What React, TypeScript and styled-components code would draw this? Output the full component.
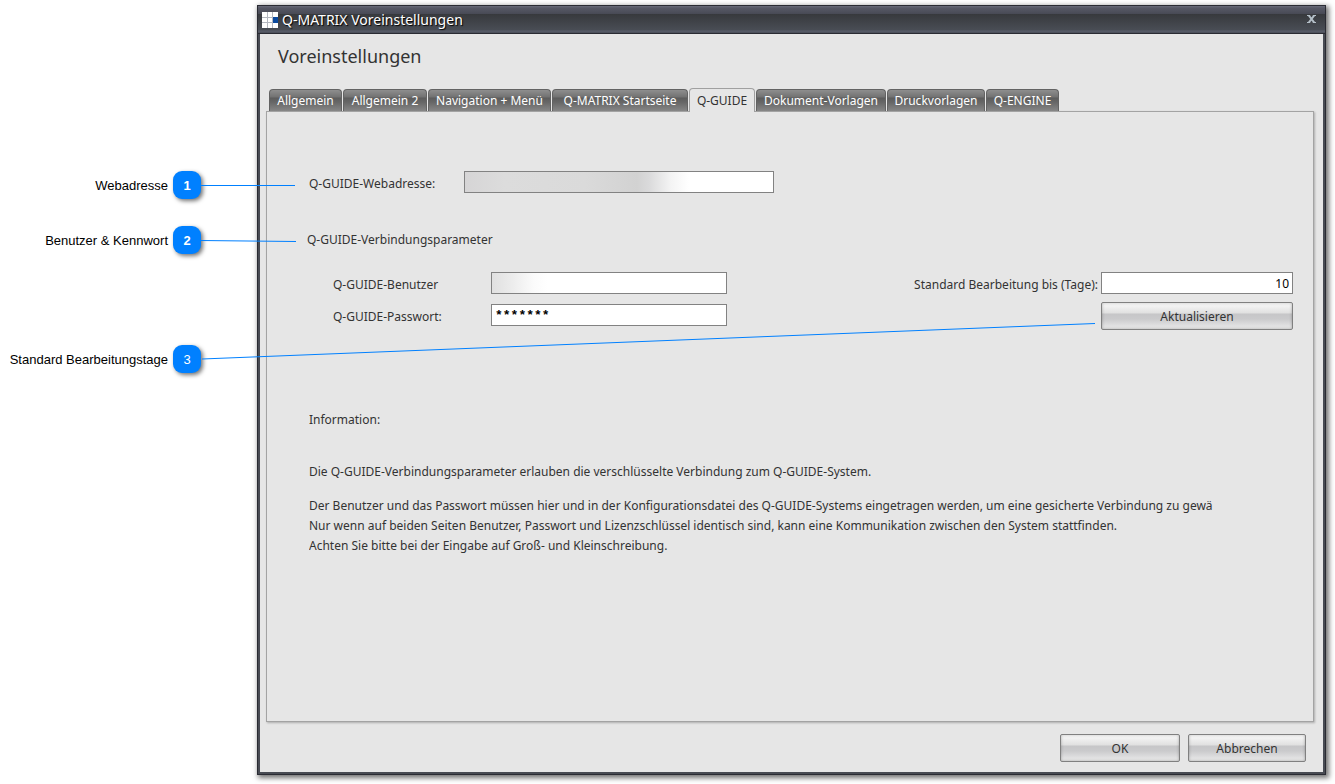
import React from "react";
import styled, { createGlobalStyle } from "styled-components";

const GlobalStyle = createGlobalStyle`
  *, *::before, *::after { box-sizing: border-box; }
  body {
    margin: 0;
    background: #fff;
    color: #333;
    font: 12px/20px "Noto Sans", "DejaVu Sans Condensed", sans-serif;
  }
  p, h1, h2, ol { margin: 0; padding: 0; }
  input, button { font: inherit; color: inherit; }
`;

const Page = styled.div`
  position: relative;
  display: flex;
  min-height: 100vh;
  padding: 5px 9px 9px 0;
`;

const Gutter = styled.ol`
  flex: 0 0 257px;
  display: flex;
  flex-direction: column;
  gap: 25px;
  padding: 166px 56px 0 0;
  list-style: none;
`;

const Callout = styled.li<{ $gapAbove?: boolean }>`
  display: flex;
  align-items: flex-start;
  justify-content: flex-end;
  gap: 5px;
  margin-top: ${(p) => (p.$gapAbove ? "64px" : "0")};
  color: #000;
  font: 13px/30px "Liberation Sans", Arial, sans-serif;
  white-space: nowrap;
`;

const Badge = styled.span<{ $bold?: boolean }>`
  width: 28px;
  height: 28px;
  border-radius: 9px;
  background: #0080ff;
  box-shadow: 2px 2px 4px rgba(0, 0, 0, 0.55);
  color: #fff;
  text-align: center;
  font-weight: ${(p) => (p.$bold ? 700 : 400)};
`;

const Leaders = styled.svg`
  position: absolute;
  left: 200px;
  top: 180px;
  width: 96px;
  height: 70px;
  pointer-events: none;
`;

const LongLeader = styled.svg`
  position: absolute;
  left: 202px;
  right: 240px;
  top: 323px;
  width: calc(100% - 442px);
  height: 37px;
  pointer-events: none;
`;

const Dialog = styled.section`
  flex: 1;
  min-width: 0;
  display: flex;
  flex-direction: column;
  border: 1px solid #2a2b33;
  background: #e6e6e6;
  box-shadow: 2px 2px 5px 1px rgba(0, 0, 0, 0.55);
`;

const TitleBar = styled.header`
  display: flex;
  align-items: center;
  height: 28px;
  padding: 0 8px 0 4px;
  border-bottom: 1px solid #2a2b33;
  background: linear-gradient(
    #696b7a 0, #565865 2px, #484a55 8px,
    #37393d 8px, #494d55 24px, #5a5e6b 25px, #4a4d57 27px
  );
  color: #fff;
`;

const AppIcon = styled.svg`
  width: 16px;
  height: 16px;
  margin-right: 4px;
`;

const Title = styled.h1`
  flex: 1;
  font-size: 14px;
  font-weight: 400;
  line-height: 26px;
  text-shadow: 1px 1px 1px #000;
`;

const CloseButton = styled.button`
  width: 12px;
  height: 12px;
  padding: 0 0 2px;
  border: 0;
  background: none;
  display: flex;
  align-items: center;
  justify-content: center;
`;

const Body = styled.div`
  flex: 1;
  display: flex;
  flex-direction: column;
  padding: 10px 9px 10px 6px;
  border: solid #484b53;
  border-width: 0 2px 2px;
`;

const Heading = styled.h2`
  margin: 0 0 20px 12px;
  font-size: 18px;
  font-weight: 400;
  line-height: 24px;
`;

const TabBar = styled.div`
  display: flex;
  align-items: flex-end;
  gap: 1px;
  height: 23px;
  padding-left: 3px;
`;

const Tab = styled.button<{ $active?: boolean; $width: number }>`
  position: relative;
  width: ${(p) => p.$width}px;
  height: ${(p) => (p.$active ? "24px" : "22px")};
  margin-bottom: ${(p) => (p.$active ? "-1px" : "0")};
  padding: 0;
  border: 1px solid ${(p) => (p.$active ? "#a0a0a0" : "#636363")};
  border-bottom: 0;
  border-radius: 4px 4px 0 0;
  background: ${(p) =>
    p.$active
      ? "#e6e6e6"
      : "linear-gradient(#8e8e8e 0, #727272 7px, #5c5c5c 8px, #666 12px, #8a8a8a 22px)"};
  color: ${(p) => (p.$active ? "#333" : "#fff")};
  line-height: 20px;
  white-space: nowrap;
`;

const Panel = styled.div`
  flex: 1;
  padding: 59px 20px 20px 42px;
  border: 1px solid #a3a3a3;
  box-shadow: 1px 1px 2px rgba(0, 0, 0, 0.25);
`;

const FieldRow = styled.div<{ $labelWidth: number }>`
  display: grid;
  grid-template-columns: ${(p) => p.$labelWidth}px auto;
  align-items: start;
  justify-content: start;
  height: 22px;
`;

const Label = styled.label`
  height: 22px;
  line-height: 26px;
  white-space: nowrap;
`;

const TextInput = styled.input<{ $width: number; $fill?: string; $right?: boolean }>`
  width: ${(p) => p.$width}px;
  height: 22px;
  padding: 0 3px;
  border: 1px solid #828282;
  border-radius: 0;
  outline: 0;
  background: ${(p) => p.$fill ?? "#fff"};
  color: #000;
  text-align: ${(p) => (p.$right ? "right" : "left")};
`;

const MaskedInput = styled(TextInput)`
  font: 700 13px/20px "Liberation Mono", monospace;
`;

const GroupTitle = styled.p`
  margin: 37px 0 22px -2px;
`;

const Columns = styled.div`
  display: flex;
  justify-content: space-between;
  align-items: flex-start;
  padding-left: 24px;
`;

const Credentials = styled.div`
  display: flex;
  flex-direction: column;
  gap: 10px;
`;

const Deadline = styled.div`
  display: grid;
  grid-template-columns: auto 192px;
  column-gap: 3px;
  row-gap: 8px;
`;

const Button = styled.button<{ $width?: string }>`
  grid-column: 2;
  width: ${(p) => p.$width ?? "100%"};
  height: 28px;
  padding: 2px 0 0;
  border: 1px solid #808080;
  border-radius: 2px;
  background: linear-gradient(#fafafa 0, #e0e0e0 10px, #c6c6c8 11px, #cacacc 16px, #ececec 26px);
  box-shadow: inset 0 0 3px rgba(0, 0, 0, 0.3), inset 0 1px 0 #fff;
`;

const Info = styled.div`
  margin-top: 80px;
  max-width: 920px;
  overflow: hidden;
`;

const Paragraph = styled.p<{ $space?: number }>`
  margin-top: ${(p) => p.$space ?? 0}px;
  white-space: nowrap;
`;

const Footer = styled.footer`
  display: flex;
  justify-content: flex-end;
  gap: 8px;
  padding: 12px 8px 0 0;
`;

const tabs: { label: string; width: number }[] = [
  { label: "Allgemein", width: 73 },
  { label: "Allgemein 2", width: 84 },
  { label: "Navigation + Menü", width: 123 },
  { label: "Q-MATRIX Startseite", width: 136 },
  { label: "Q-GUIDE", width: 66 },
  { label: "Dokument-Vorlagen", width: 130 },
  { label: "Druckvorlagen", width: 98 },
  { label: "Q-ENGINE", width: 73 },
];

const urlFill =
  "linear-gradient(90deg, #d6d5d6 0, #dcdcdc 40px, #dadada 120px, #d2d2d2 172px, #dadadb 184px, #f4f4f4 206px, #fff 224px)";
const userFill = "linear-gradient(90deg, #e0e0e0 0, #ececec 20px, #fbfbfb 42px, #fff 56px)";

export default function App() {
  return (
    <>
      <GlobalStyle />
      <Page>
        <Gutter>
          <Callout>
            Webadresse <Badge $bold>1</Badge>
          </Callout>
          <Callout>
            Benutzer &amp; Kennwort <Badge $bold>2</Badge>
          </Callout>
          <Callout $gapAbove>
            Standard Bearbeitungstage <Badge>3</Badge>
          </Callout>
        </Gutter>
        <Dialog aria-label="Q-MATRIX Voreinstellungen">
          <TitleBar>
            <AppIcon viewBox="0 0 16 16" aria-hidden="true">
              <path d="M0 0h16v16H0z" fill="#fff" />
              <path d="M11 5h5v6h-5z" fill="#0b4a9e" />
              <path d="M5.5 0v16M10.5 0v16M0 5.5h11M0 10.5h11" stroke="#b4b8c0" fill="none" />
            </AppIcon>
            <Title>Q-MATRIX Voreinstellungen</Title>
            <CloseButton aria-label="Schließen">
              <svg width="9" height="8" viewBox="0 0 9 8" aria-hidden="true">
                <path d="M0 .5h3.2M5.8 .5H9M0 7.5h3.2M5.8 7.5H9" stroke="#b4bfc8" />
                <path d="M1.8 .5l5.4 7M7.2 .5l-5.4 7" stroke="#b4bfc8" strokeWidth="2" />
              </svg>
            </CloseButton>
          </TitleBar>
          <Body>
            <Heading>Voreinstellungen</Heading>
            <TabBar role="tablist">
              {tabs.map(({ label, width }) => (
                <Tab
                  key={label}
                  role="tab"
                  aria-selected={label === "Q-GUIDE"}
                  $active={label === "Q-GUIDE"}
                  $width={width}
                >
                  {label}
                </Tab>
              ))}
            </TabBar>
            <Panel role="tabpanel">
              <FieldRow $labelWidth={155}>
                <Label htmlFor="url">Q-GUIDE-Webadresse:</Label>
                <TextInput id="url" $width={310} $fill={urlFill} />
              </FieldRow>
              <GroupTitle>Q-GUIDE-Verbindungsparameter</GroupTitle>
              <Columns>
                <Credentials>
                  <FieldRow $labelWidth={158}>
                    <Label htmlFor="user">Q-GUIDE-Benutzer</Label>
                    <TextInput id="user" $width={236} $fill={userFill} />
                  </FieldRow>
                  <FieldRow $labelWidth={158}>
                    <Label htmlFor="password">Q-GUIDE-Passwort:</Label>
                    <MaskedInput id="password" $width={236} defaultValue="*******" autoComplete="off" />
                  </FieldRow>
                </Credentials>
                <Deadline>
                  <Label htmlFor="days">Standard Bearbeitung bis (Tage):</Label>
                  <TextInput id="days" $width={192} $right defaultValue="10" />
                  <Button type="button">Aktualisieren</Button>
                </Deadline>
              </Columns>
              <Info>
                <Paragraph>Information:</Paragraph>
                <Paragraph $space={32}>
                  Die Q-GUIDE-Verbindungsparameter erlauben die verschlüsselte Verbindung zum Q-GUIDE-System.
                </Paragraph>
                <Paragraph $space={14}>
                  Der Benutzer und das Passwort müssen hier und in der Konfigurationsdatei des Q-GUIDE-Systems
                  eingetragen werden, um eine gesicherte Verbindung zu gewä
                </Paragraph>
                <Paragraph>
                  Nur wenn auf beiden Seiten Benutzer, Passwort und Lizenzschlüssel identisch sind, kann eine
                  Kommunikation zwischen den System stattfinden.
                </Paragraph>
                <Paragraph>Achten Sie bitte bei der Eingabe auf Groß- und Kleinschreibung.</Paragraph>
              </Info>
            </Panel>
            <Footer>
              <Button type="button" $width="120px">OK</Button>
              <Button type="button" $width="118px">Abbrechen</Button>
            </Footer>
          </Body>
        </Dialog>
        <Leaders viewBox="0 0 96 70" aria-hidden="true">
          <path d="M0 5.5h95M0 60.5L96 61.5" stroke="#0080ff" fill="none" />
        </Leaders>
        <LongLeader viewBox="0 0 893 37" preserveAspectRatio="none" aria-hidden="true">
          <path d="M0 36L893 .5" stroke="#0080ff" fill="none" />
        </LongLeader>
      </Page>
    </>
  );
}
